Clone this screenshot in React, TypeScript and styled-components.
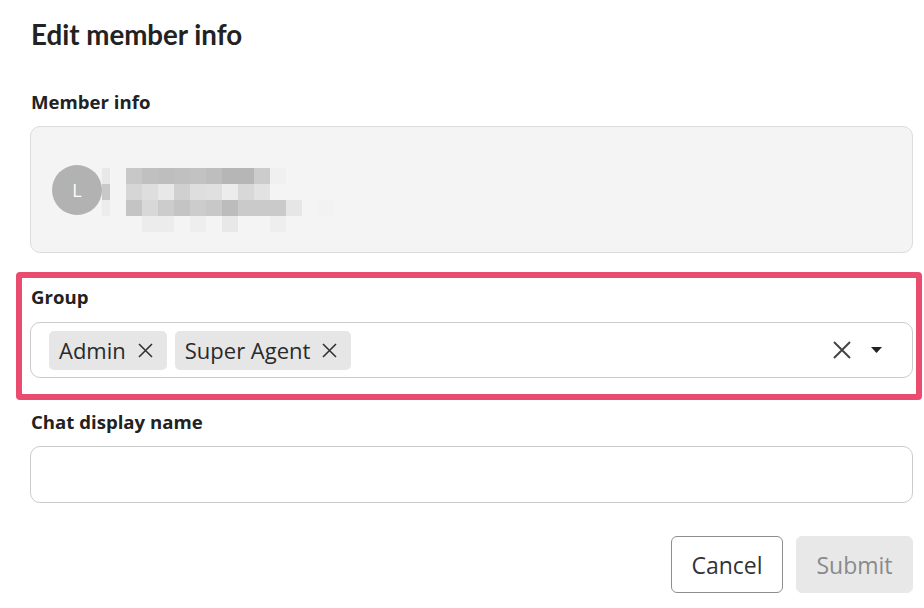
import React from "react";
import styled, { createGlobalStyle } from "styled-components";

const Global = createGlobalStyle`
  html, body { margin: 0; padding: 0; background: #ffffff; }
  body { font-family: "Open Sans", "Noto Sans", sans-serif; color: #222222; }
  * { box-sizing: border-box; }
`;

const Page = styled.div`
  width: 883px;
  margin-left: 30px;
  padding-top: 17px;
  display: flex;
  flex-direction: column;
`;

const Title = styled.h1`
  margin: 0 0 37px 1px;
  font-family: Lato, "Open Sans", sans-serif;
  font-size: 27.7px;
  line-height: 36px;
  font-weight: 700;
  color: #222222;
`;

const Label = styled.div<{ $gap?: number; $top?: number }>`
  margin: ${(p) => p.$top ?? 0}px 0 ${(p) => p.$gap ?? 12}px 1px;
  font-size: 18.6px;
  line-height: 24px;
  font-weight: 700;
  color: #222222;
`;

const InfoBox = styled.div`
  height: 127px;
  background: #f4f4f4;
  border: 1px solid #dcdcdc;
  border-radius: 10px;
  padding-left: 21px;
  display: flex;
  align-items: center;
`;

const Avatar = styled.div`
  width: 50px;
  height: 50px;
  border-radius: 50%;
  background: #b2b2b2;
  color: #ffffff;
  font-size: 18px;
  display: flex;
  align-items: center;
  justify-content: center;
  flex-shrink: 0;
`;

const Blur = styled.div`
  display: block;
  margin-top: 5px;
  line-height: 0;
`;

const Highlight = styled.div`
  margin: 19px 0 0 -14px;
  width: 906px;
  border: 6px solid #e94c6e;
  border-radius: 4px;
  padding: 7px 3px 16px 8px;
`;

const SelectBox = styled.div`
  height: 56px;
  border: 1px solid #cccccc;
  border-radius: 10px;
  padding: 0 30px 0 18px;
  display: flex;
  align-items: center;
`;

const Chips = styled.div`
  flex: 1;
  display: flex;
  gap: 8px;
`;

const Chip = styled.div`
  height: 39px;
  background: #e6e6e6;
  border-radius: 5px;
  padding: 0 14px 0 10px;
  display: flex;
  align-items: center;
  gap: 12px;
  font-size: 22px;
  color: #2a2a2a;
`;

const IconBtn = styled.span`
  display: flex;
  align-items: center;
`;

const Controls = styled.div`
  display: flex;
  align-items: center;
  gap: 20px;
`;

const TextInput = styled.div`
  height: 57px;
  border: 1px solid #cccccc;
  border-radius: 10px;
  background: #ffffff;
`;

const Actions = styled.div`
  margin-top: 33px;
  display: flex;
  justify-content: flex-end;
  gap: 13px;
`;

const Button = styled.button<{ $primary?: boolean }>`
  height: 57px;
  width: ${(p) => (p.$primary ? 117 : 112)}px;
  border-radius: 6px;
  border: 1px solid ${(p) => (p.$primary ? "#e8e8e8" : "#8e8e8e")};
  background: ${(p) => (p.$primary ? "#e8e8e8" : "#ffffff")};
  color: ${(p) => (p.$primary ? "#8a8a8a" : "#333333")};
  font-family: "Open Sans", "Noto Sans", sans-serif;
  font-size: 23px;
  padding: 0;
`;

const SmallX = () => (
  <svg width="15" height="15" viewBox="0 0 15 15">
    <path d="M1 1L14 14M14 1L1 14" stroke="#333" strokeWidth="1.6" />
  </svg>
);

const ClearX = () => (
  <svg width="18" height="18" viewBox="0 0 18 18">
    <path d="M1 1L17 17M17 1L1 17" stroke="#444" strokeWidth="2" />
  </svg>
);

const Caret = () => (
  <svg width="11" height="6" viewBox="0 0 11 6">
    <path d="M0 0H11L5.5 6Z" fill="#222" />
  </svg>
);

const cols = [102.7, 110.7, 126.7, 142.7, 158.7, 174.7, 190.7, 206.7, 222.7, 238.7, 254.7, 270.7, 286.7, 302.7, 318.7, 334.7];
const rows: number[][] = [
  [248, 244, 246, 250, 246, 248, 250, 250, 246, 248, 250, 252, 255, 255, 255, 255],
  [232, 244, 200, 192, 190, 192, 194, 190, 182, 182, 204, 240, 246, 255, 255, 255],
  [200, 250, 214, 222, 232, 208, 222, 224, 236, 216, 226, 248, 246, 250, 252, 255],
  [236, 244, 196, 216, 204, 196, 204, 200, 188, 202, 202, 202, 230, 246, 242, 255],
  [246, 248, 246, 236, 236, 244, 238, 246, 232, 246, 248, 238, 246, 252, 255, 255],
];

const Pixels = () => (
  <svg width="260" height="80" viewBox="102.7 0 260 80">
    {rows.map((r, ri) =>
      r.map((v, ci) => {
        const x = cols[ci];
        const w = ci === 0 ? 8 : 16;
        const g = Math.min(v, 244);
        return (
          <rect
            key={`${ri}-${ci}`}
            x={x}
            y={ri * 16}
            width={w}
            height={16}
            fill={`rgb(${g},${g},${g})`}
          />
        );
      })
    )}
  </svg>
);

export default function App() {
  return (
    <>
      <Global />
      <Page>
        <Title>Edit member info</Title>
        <Label>Member info</Label>
        <InfoBox>
          <Avatar>L</Avatar>
          <Blur>
            <Pixels />
          </Blur>
        </InfoBox>
        <Highlight>
          <Label $gap={13}>Group</Label>
          <SelectBox>
            <Chips>
              <Chip>
                Admin
                <IconBtn>
                  <SmallX />
                </IconBtn>
              </Chip>
              <Chip>
                Super Agent
                <IconBtn>
                  <SmallX />
                </IconBtn>
              </Chip>
            </Chips>
            <Controls>
              <IconBtn>
                <ClearX />
              </IconBtn>
              <IconBtn>
                <Caret />
              </IconBtn>
            </Controls>
          </SelectBox>
        </Highlight>
        <Label $top={10}>Chat display name</Label>
        <TextInput />
        <Actions>
          <Button>Cancel</Button>
          <Button $primary>Submit</Button>
        </Actions>
      </Page>
    </>
  );
}
